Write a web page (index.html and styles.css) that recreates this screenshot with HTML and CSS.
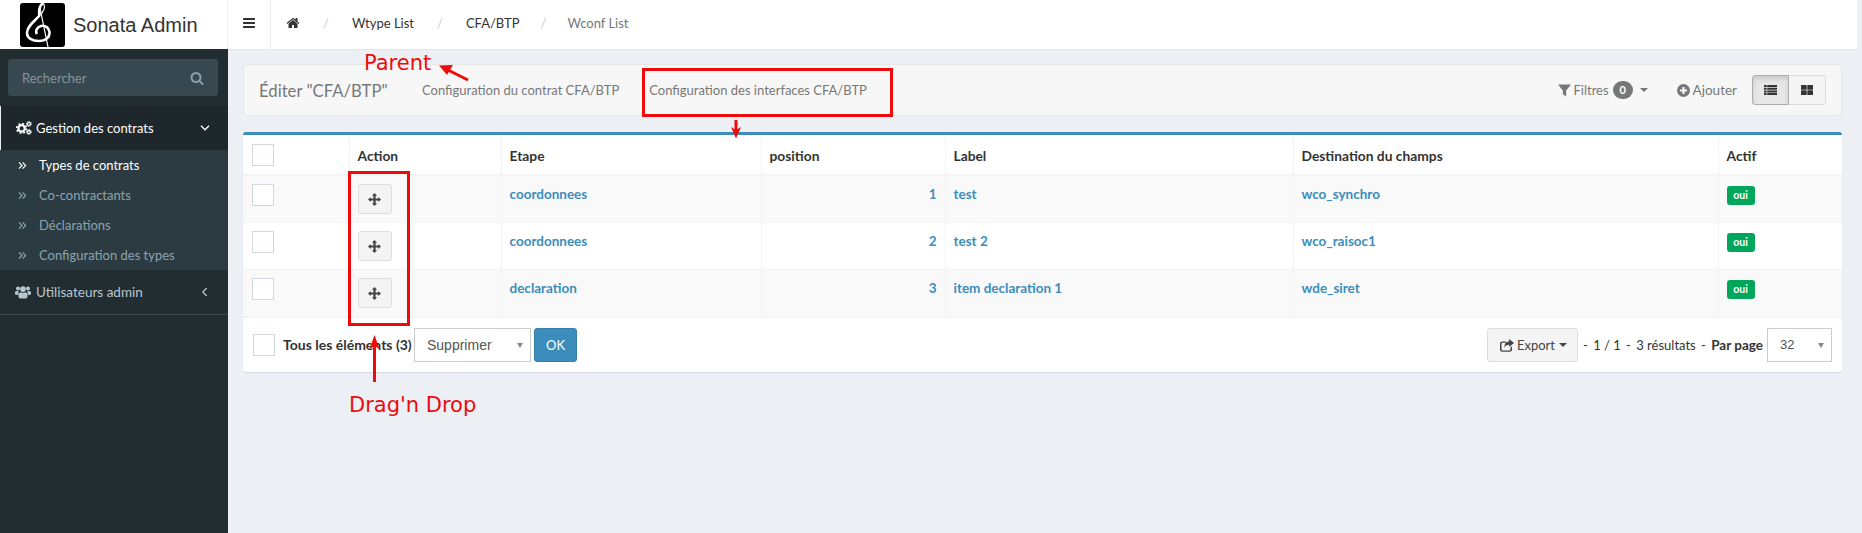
FILE: index.html
```html
<!DOCTYPE html>
<html lang="fr">
<head>
<meta charset="utf-8">
<title>Sonata Admin</title>
<link rel="stylesheet" href="styles.css">
</head>
<body>
<svg class="defs" width="0" height="0" aria-hidden="true">
  <symbol id="i-bars" viewBox="0 0 1792 1792"><path d="M1664 1344v128q0 26-19 45t-45 19h-1408q-26 0-45-19t-19-45v-128q0-26 19-45t45-19h1408q26 0 45 19t19 45zm0-512v128q0 26-19 45t-45 19h-1408q-26 0-45-19t-19-45v-128q0-26 19-45t45-19h1408q26 0 45 19t19 45zm0-512v128q0 26-19 45t-45 19h-1408q-26 0-45-19t-19-45v-128q0-26 19-45t45-19h1408q26 0 45 19t19 45z"/></symbol>
  <symbol id="i-home" viewBox="0 0 1792 1792"><path d="M1472 992v480q0 26-19 45t-45 19h-384v-384h-256v384h-384q-26 0-45-19t-19-45v-480q0-1 .5-3t.5-3l575-474 575 474q1 2 1 6zm223-69l-62 74q-8 9-21 11h-3q-13 0-21-7l-692-577-692 577q-12 8-24 7-13-2-21-11l-62-74q-8-10-7-23.500t11-21.500l719-599q32-26 76-26t76 26l244 204v-195q0-14 9-23t23-9h192q14 0 23 9t9 23v408l219 182q10 8 11 21.500t-7 23.500z"/></symbol>
  <symbol id="i-search" viewBox="0 0 1792 1792"><path d="M1216 832q0-185-131.500-316.500t-316.500-131.500-316.500 131.500-131.500 316.500 131.500 316.500 316.500 131.500 316.500-131.500 131.500-316.500zm512 832q0 52-38 90t-90 38q-54 0-90-38l-343-342q-179 124-399 124-143 0-273.500-55.500t-225-150-150-225-55.500-273.500 55.500-273.500 150-225 225-150 273.500-55.500 273.500 55.500 225 150 150 225 55.500 273.500q0 220-124 399l343 343q37 37 37 90z"/></symbol>
  <symbol id="i-cogs" viewBox="0 0 16 14">
    <circle cx="5.6" cy="7.4" r="3.2" fill="none" stroke="currentColor" stroke-width="2.2"/>
    <circle cx="5.6" cy="7.4" r="4.9" fill="none" stroke="currentColor" stroke-width="1.6" stroke-dasharray="1.9 1.95"/>
    <circle cx="12.9" cy="2.9" r="1.5" fill="none" stroke="currentColor" stroke-width="1.3"/>
    <circle cx="12.9" cy="2.9" r="2.5" fill="none" stroke="currentColor" stroke-width="1" stroke-dasharray="1 .96"/>
    <circle cx="12.9" cy="11" r="1.5" fill="none" stroke="currentColor" stroke-width="1.3"/>
    <circle cx="12.9" cy="11" r="2.5" fill="none" stroke="currentColor" stroke-width="1" stroke-dasharray="1 .96"/>
  </symbol>
  <symbol id="i-users" viewBox="0 0 16 13">
    <circle cx="3" cy="3" r="2"/><circle cx="13" cy="3" r="2"/><circle cx="8" cy="3.600" r="2.900"/>
    <path d="M0 9V7q0-1.500 1.500-1.500h2Q3 7 3.600 8.500 3 9 2.800 9.500zM16 9V7q0-1.500-1.500-1.500h-2Q13 7 12.400 8.500 13 9 13.200 9.500z"/>
    <path d="M3.500 11V9q0-2 2-2.300 2.500 1.300 5 0 2 .3 2 2.300v2q0 2-2 2h-5q-2 0-2-2z"/>
  </symbol>
  <symbol id="i-dbl" viewBox="0 0 9 8"><path d="M1 .8 4 4 1 7.200M4.600.8 7.600 4 4.600 7.200" fill="none" stroke="currentColor" stroke-width="1.200"/></symbol>
  <symbol id="i-move" viewBox="0 0 14 14"><path d="M7 0 9.800 3H8.200V5.800H11V4.200L14 7 11 9.800V8.200H8.200V11H9.800L7 14 4.200 11H5.800V8.200H3V9.800L0 7 3 4.200V5.800H5.800V3H4.200z"/></symbol>
  <symbol id="i-filter" viewBox="0 0 12 12"><path d="M0 .5h12L7.500 6v5.500L4.500 9.500V6z"/></symbol>
  <symbol id="i-plus" viewBox="0 0 12 12"><path fill-rule="evenodd" d="M6 0a6 6 0 1 0 0 12A6 6 0 0 0 6 0zM5 2.700h2V5h2.300v2H7v2.300H5V7H2.700V5H5z"/></symbol>
  <symbol id="i-list" viewBox="0 0 13 10"><path d="M0 0h2.600v2H0zM3.200 0H13v2H3.200zM0 2.700h2.600v2H0zM3.200 2.700H13v2H3.200zM0 5.400h2.600v2H0zM3.200 5.400H13v2H3.200zM0 8h2.600v2H0zM3.200 8H13v2H3.200z"/></symbol>
  <symbol id="i-grid" viewBox="0 0 12 10"><path d="M0 .5q0-.5.5-.5h4.700q.5 0 .5.500v3.700q0 .5-.5.500H.5q-.5 0-.5-.5zM6.300.5q0-.5.5-.5h4.700q.5 0 .5.500v3.700q0 .5-.5.500H6.800q-.5 0-.5-.5zM0 5.800q0-.5.5-.5h4.700q.5 0 .5.500v3.700q0 .5-.5.500H.5q-.5 0-.5-.5zM6.300 5.800q0-.5.5-.5h4.700q.5 0 .5.500v3.700q0 .5-.5.500H6.800q-.5 0-.5-.5z"/></symbol>
  <symbol id="i-share" viewBox="0 0 14 13"><path d="M2.500 2.500H6v1.300H2.800q-1.300 0-1.300 1.300v5.100q0 1.300 1.300 1.300h6.400q1.300 0 1.300-1.300V8.500L12 7.300v2.900q0 2.500-2.500 2.500h-7Q0 12.700 0 10.200V5q0-2.500 2.500-2.500z"/><path d="M9.200 0 14 4 9.200 8V5.700Q5.500 5.600 4.400 9 4 3 9.200 2.300z"/></symbol>
</svg>

<div class="app">
  <aside class="sidebar">
    <div class="brand">
      <svg class="logo" viewBox="0 0 45 44" role="img" aria-label="Logo">
        <rect width="45" height="44" rx="3" fill="#000"/>
        <path d="M23 0C17 5 20 10 19 13 14 19 7 23 7 30c0 5 5 8 12 8 7 0 11-4 10.500-9-.5-4-4-7-8.500-6-4 1-6 5-4 8" fill="none" stroke="#fff" stroke-width="2.600"/>
        <path d="M23 0C26 3 24 9 19 13M20 5 28 44" fill="none" stroke="#fff" stroke-width="1.200"/>
      </svg>
      <span class="brand-name">Sonata Admin</span>
    </div>
    <div class="search">
      <span class="search-text">Rechercher</span>
      <svg class="search-icon"><use href="#i-search"/></svg>
    </div>
    <nav class="menu">
      <div class="menu-item is-open">
        <svg class="menu-icon cogs"><use href="#i-cogs"/></svg>
        <span class="menu-label">Gestion des contrats</span>
        <svg class="chev" viewBox="0 0 8 8"><path d="M.8 2.200 4 5.400 7.200 2.200" fill="none" stroke="currentColor" stroke-width="1"/></svg>
      </div>
      <ul class="submenu">
        <li class="sub-item is-current"><svg class="dbl"><use href="#i-dbl"/></svg>Types de contrats</li>
        <li class="sub-item"><svg class="dbl"><use href="#i-dbl"/></svg>Co-contractants</li>
        <li class="sub-item"><svg class="dbl"><use href="#i-dbl"/></svg>Déclarations</li>
        <li class="sub-item"><svg class="dbl"><use href="#i-dbl"/></svg>Configuration des types</li>
      </ul>
      <div class="menu-item closed">
        <svg class="menu-icon users"><use href="#i-users"/></svg>
        <span class="menu-label">Utilisateurs admin</span>
        <svg class="chev" viewBox="0 0 8 8"><path d="M5.400.8 2.200 4 5.400 7.200" fill="none" stroke="currentColor" stroke-width="1"/></svg>
      </div>
    </nav>
  </aside>

  <div class="main">
    <header class="topbar">
      <div class="toggle"><svg class="bars"><use href="#i-bars"/></svg></div>
      <ol class="crumbs">
        <li class="crumb"><svg class="home"><use href="#i-home"/></svg></li>
        <li class="crumb">Wtype List</li>
        <li class="crumb">CFA/BTP</li>
        <li class="crumb muted">Wconf List</li>
      </ol>
    </header>

    <section class="content">
      <div class="actionbar">
        <h1 class="title">Éditer "CFA/BTP"</h1>
        <a class="tab">Configuration du contrat CFA/BTP</a>
        <a class="tab">Configuration des interfaces CFA/BTP</a>
        <div class="tools">
          <span class="tool filters"><svg class="ti"><use href="#i-filter"/></svg>Filtres <b class="count">0</b><i class="caret"></i></span>
          <span class="tool add"><svg class="ti"><use href="#i-plus"/></svg>Ajouter</span>
          <div class="switch">
            <span class="sw active"><svg class="sw-list"><use href="#i-list"/></svg></span>
            <span class="sw"><svg class="sw-grid"><use href="#i-grid"/></svg></span>
          </div>
        </div>
      </div>

      <div class="box">
        <table class="grid">
          <colgroup>
            <col class="c1"><col class="c2"><col class="c3"><col class="c4"><col class="c5"><col class="c6"><col class="c7">
          </colgroup>
          <thead>
            <tr>
              <th><span class="check"></span></th>
              <th>Action</th>
              <th>Etape</th>
              <th>position</th>
              <th>Label</th>
              <th>Destination du champs</th>
              <th>Actif</th>
            </tr>
          </thead>
          <tbody>
            <tr>
              <td><span class="check"></span></td>
              <td><span class="drag"><svg class="move"><use href="#i-move"/></svg></span></td>
              <td><a class="lnk">coordonnees</a></td>
              <td class="num"><a class="lnk">1</a></td>
              <td><a class="lnk">test</a></td>
              <td><a class="lnk">wco_synchro</a></td>
              <td><span class="badge">oui</span></td>
            </tr>
            <tr>
              <td><span class="check"></span></td>
              <td><span class="drag"><svg class="move"><use href="#i-move"/></svg></span></td>
              <td><a class="lnk">coordonnees</a></td>
              <td class="num"><a class="lnk">2</a></td>
              <td><a class="lnk">test 2</a></td>
              <td><a class="lnk">wco_raisoc1</a></td>
              <td><span class="badge">oui</span></td>
            </tr>
            <tr>
              <td><span class="check"></span></td>
              <td><span class="drag"><svg class="move"><use href="#i-move"/></svg></span></td>
              <td><a class="lnk">declaration</a></td>
              <td class="num"><a class="lnk">3</a></td>
              <td><a class="lnk">item declaration 1</a></td>
              <td><a class="lnk">wde_siret</a></td>
              <td><span class="badge">oui</span></td>
            </tr>
          </tbody>
        </table>
        <div class="boxfoot">
          <span class="check"></span>
          <strong class="all">Tous les éléments (3)</strong>
          <span class="select action-select">Supprimer<i class="sel-caret"></i></span>
          <span class="ok">OK</span>
          <div class="pager">
            <span class="export"><svg class="share"><use href="#i-share"/></svg>Export<i class="caret dark"></i></span>
            <span class="pinfo">- <span class="pi">1 / 1</span> - <span class="pi">3 résultats</span> - <strong class="pi">Par page</strong></span>
            <span class="select page-select">32<i class="sel-caret"></i></span>
          </div>
        </div>
      </div>
    </section>
  </div>
</div>

<svg class="annot" viewBox="0 0 1862 533" aria-hidden="true">
  <g fill="none" stroke="#ee0b0b" stroke-width="3">
    <rect x="643.500" y="69.500" width="248" height="46"/>
    <rect x="349.500" y="172.500" width="59" height="152"/>
    <path d="M468 80 445 68.500"/>
    <path d="M736 120V132"/>
    <path d="M374.500 382V345"/>
  </g>
  <g fill="#ee0b0b">
    <path d="M439 65.500 453 65 447 75z"/>
    <path d="M736 138.500 731 127 736 130 741 127z"/>
    <path d="M374.500 335 379.500 349 374.500 346 369.500 349z"/>
  </g>
</svg>
<span class="note note-parent">Parent</span>
<span class="note note-drag">Drag'n Drop</span>
</body>
</html>
```

FILE: styles.css
```css
* { box-sizing: border-box; }
html, body { margin: 0; padding: 0; height: 533px; overflow: hidden; }
body {
  position: relative;
  background: #ecf0f5;
  color: #333;
  font-family: "Lato", "Liberation Sans", sans-serif;
  font-size: 13px;
  line-height: 20px;
}
.defs { position: absolute; }
ul, ol { list-style: none; margin: 0; padding: 0; }
svg { fill: currentColor; display: block; }

.app { display: flex; height: 533px; width: 1857px; }

/* sidebar */
.sidebar { width: 228px; flex: none; display: flex; flex-direction: column; background: #222d32; }
.brand { height: 49px; background: #fff; display: flex; align-items: center; padding: 0 0 0 20px; border-right: 1px solid #eee; }
.logo { width: 45px; height: 44px; flex: none; }
.brand-name { margin-left: 8px; font-family: "Liberation Sans", sans-serif; font-size: 20px; color: #333; white-space: nowrap; }
.search { margin: 10px 10px 10px 8px; height: 37px; background: #374850; border-radius: 3px; display: flex; align-items: center; justify-content: space-between; padding: 0 14px 0 14px; color: #8a979c; }
.search-text { color: #87949a; }
.search-icon { width: 14px; height: 14px; color: #8f9ca1; }
.menu-item { height: 44px; display: flex; align-items: center; padding: 0 18px 0 15px; color: #b8c7ce; }
.menu-item.is-open { background: #1e282c; color: #fff; border-left: 1px solid #e8edef; padding-left: 15px; }
.menu-item.closed { height: 45px; border-bottom: 1px solid #3b474c; }
.menu-icon { width: 16px; height: 14px; flex: none; }
.menu-label { margin-left: 4px; flex: 1; white-space: nowrap; }
.closed .menu-label { margin-left: 5px; font-size: 13.5px; }
.chev { width: 10px; height: 10px; flex: none; }
.submenu { background: #2c3b41; height: 120px; padding-top: 0; }
.sub-item { height: 30px; display: flex; align-items: center; padding-left: 18px; color: #8aa4af; white-space: nowrap; }
.sub-item.is-current { color: #fff; }
.dbl { width: 9px; height: 9px; margin-right: 12px; flex: none; }

/* top bar */
.main { flex: 1; min-width: 0; display: flex; flex-direction: column; }
.topbar { height: 50px; background: #fff; border-bottom: 1px solid #e3e6ea; display: flex; align-items: stretch; flex: none; }
.toggle { width: 43px; border-right: 1px solid #eee; display: flex; align-items: center; justify-content: center; padding-bottom: 3px; color: #333; }
.bars { width: 14px; height: 14px; }
.crumbs { display: flex; align-items: center; padding: 0 0 3px 15px; }
.crumb { display: flex; align-items: center; color: #333; }
.crumb + .crumb::before { content: "/"; color: #ccc; padding: 0 23px; }
.crumb.muted::before { padding: 0 21px; }
.muted { color: #777; }
.home { width: 14px; height: 14px; }

/* content */
.content { padding: 14px 0 0 15px; flex: 1; }
.actionbar { width: 1599px; height: 52px; background: #f7f7f7; border: 1px solid #e7e7e7; border-radius: 4px; display: flex; align-items: center; padding: 0 15px; margin-bottom: 16px; }
.title { margin: 0; font-size: 16.7px; font-weight: 400; color: #777; white-space: nowrap; width: 148px; padding-top: 2px; flex: none; }
.tab { color: #777; white-space: nowrap; margin-left: 15px; margin-right: 15px; }
.tools { margin-left: auto; display: flex; align-items: center; }
.tool { display: flex; align-items: center; color: #777; white-space: nowrap; }
.ti { width: 13px; height: 13px; margin-right: 3px; }
.filters { margin-right: 29px; }
.filters .ti { margin-right: 2px; }
.count { display: inline-block; width: 20px; height: 18px; margin-left: 4px; border-radius: 10px; background: #777; color: #fff; font-size: 11px; font-weight: 700; line-height: 18px; text-align: center; }
.caret { display: inline-block; width: 0; height: 0; margin-left: 7px; border-top: 4px solid currentColor; border-left: 4px solid transparent; border-right: 4px solid transparent; }
.add { margin-right: 15px; font-size: 13.5px; }
.switch { display: flex; height: 30px; }
.sw { width: 37px; display: flex; align-items: center; justify-content: center; background: #f4f4f4; border: 1px solid #ddd; color: #333; }
.sw.active { background: #e7e7e7; border-color: #adadad; box-shadow: inset 0 3px 5px rgba(0,0,0,.125); border-radius: 3px 0 0 3px; }
.sw:last-child { border-left: 0; border-radius: 0 3px 3px 0; }
.sw-list { width: 13px; height: 10px; }
.sw-grid { width: 12px; height: 10px; }

/* table box */
.box { width: 1599px; background: #fff; border-top: 3px solid #3c8dbc; border-radius: 3px; box-shadow: 0 1px 1px rgba(0,0,0,.1); }
.grid { width: 1599px; table-layout: fixed; border-collapse: collapse; }
.c1 { width: 106px; } .c2 { width: 152px; } .c3 { width: 260px; } .c4 { width: 184px; }
.c5 { width: 348px; } .c6 { width: 425px; } .c7 { width: 124px; }
.grid th { height: 40px; padding: 10px 8px 8px; text-align: left; font-size: 13.8px; font-weight: 700; color: #333; border-left: 1px solid #f4f4f4; border-bottom: 2px solid #f4f4f4; vertical-align: middle; white-space: nowrap; }
.grid th:first-child { padding-top: 8px; }
.grid td { height: 47px; padding: 8px; border-left: 1px solid #f4f4f4; border-top: 1px solid #f4f4f4; vertical-align: top; font-size: 13.5px; }
.grid tbody tr:first-child td, .grid tbody tr:last-child td { height: 46px; }
.grid th:first-child, .grid td:first-child { border-left: 0; padding-left: 9px; }
.grid tbody tr:nth-child(odd) { background: #f9f9f9; }
.check { display: block; width: 22px; height: 22px; background: #fff; border: 1px solid #d2d6de; }
.lnk { color: #3c8dbc; font-weight: 700; white-space: nowrap; }
.num { text-align: right; }
.drag { display: flex; width: 34px; height: 30px; align-items: center; justify-content: center; background: #f4f4f4; border: 1px solid #ddd; border-radius: 3px; color: #444; }
.move { width: 13px; height: 13px; }
.badge { display: inline-block; width: 28px; height: 19px; margin-top: 1px; background: #00a65a; color: #fff; border-radius: 3px; font-size: 10.5px; font-weight: 700; line-height: 19px; text-align: center; }

.boxfoot { display: flex; align-items: center; height: 56px; padding: 0 10px; border-top: 2px solid #f4f4f4; }
.all { margin-left: 8px; font-size: 14px; font-weight: 700; white-space: nowrap; width: 131px; flex: none; }
.select { position: relative; display: block; height: 34px; background: #fff; border: 1px solid #ccc; font-family: "Liberation Sans", sans-serif; font-size: 14px; line-height: 32px; color: #555; }
.action-select { width: 117px; padding-left: 12px; }
.page-select { width: 65px; padding-left: 12px; font-size: 13px; margin-left: 4px; }
.sel-caret { position: absolute; right: 7px; top: 14px; width: 0; height: 0; border-top: 5px solid #888; border-left: 3px solid transparent; border-right: 3px solid transparent; }
.ok { width: 43px; height: 34px; margin-left: 3px; background: #3c8dbc; border: 1px solid #367fa9; border-radius: 3px; color: #fff; text-align: center; line-height: 32px; }
.pager { margin-left: auto; margin-right: 0; display: flex; align-items: center; }
.export { display: flex; align-items: center; width: 91px; height: 34px; padding-left: 12px; background: #f4f4f4; border: 1px solid #ddd; border-radius: 3px; color: #444; white-space: nowrap; }
.share { width: 14px; height: 13px; margin-right: 3px; flex: none; }
.caret.dark { margin-left: 4px; }
.pinfo { margin-left: 5px; white-space: nowrap; color: #333; }
.pi { margin: 0 2px; }
strong.pi { font-size: 13.5px; margin-right: 0; }

/* annotations laid over the screenshot */
.annot { position: absolute; left: 0; top: 0; width: 1862px; height: 533px; pointer-events: none; }
.note { position: absolute; font-family: "DejaVu Sans", sans-serif; font-size: 21px; line-height: 24px; color: #ee0b0b; white-space: nowrap; }
.note-parent { left: 364px; top: 51px; }
.note-drag { left: 349px; top: 393px; }
```
